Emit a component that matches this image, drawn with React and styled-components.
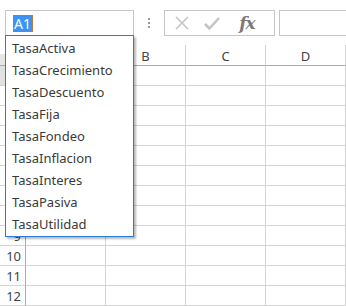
import React from "react";
import styled, { createGlobalStyle } from "styled-components";

const Global = createGlobalStyle`
  html, body { margin: 0; padding: 0; background: #fff; }
  body { font-family: "Noto Sans", "Open Sans", sans-serif; }
`;

const Page = styled.div`
  position: relative;
  width: 346px;
  height: 306px;
  overflow: hidden;
  background: #fff;
`;

const Toolbar = styled.div`
  display: flex;
  align-items: stretch;
  height: 26px;
  padding: 10px 0 0 5px;
`;

const NameBox = styled.div`
  box-sizing: border-box;
  width: 129px;
  height: 26px;
  border: 1px solid #c6c6c6;
  display: flex;
  align-items: center;
  padding-left: 7px;
`;

const Selected = styled.span`
  background: #3c93f5;
  color: #fff;
  font-size: 14px;
  line-height: 17px;
  padding: 0 1px;
  border-right: 1px solid #c07a3a;
`;

const Dots = styled.div`
  width: 30px;
  display: flex;
  flex-direction: column;
  align-items: center;
  justify-content: center;
  gap: 2px;
  & > i {
    width: 2px;
    height: 2px;
    background: #9a9a9a;
    display: block;
  }
`;

const ButtonGroup = styled.div`
  box-sizing: border-box;
  width: 111px;
  height: 26px;
  border: 1px solid #c6c6c6;
  display: flex;
  align-items: center;
  padding-left: 9px;
  gap: 0;
`;

const IconButton = styled.div`
  width: ${(p) => p.w}px;
  height: 24px;
  display: flex;
  align-items: center;
  justify-content: center;
`;

const Fx = styled.span`
  font-family: "DejaVu Serif", "Liberation Serif", serif;
  font-style: italic;
  font-weight: bold;
  font-size: 17px;
  color: #7a7a7a;
  letter-spacing: -1px;
`;

const FormulaInput = styled.div`
  box-sizing: border-box;
  flex: 1;
  margin-left: 4px;
  height: 26px;
  border: 1px solid #c6c6c6;
  border-right: none;
`;

const Sheet = styled.div`
  margin-top: 9px;
  display: grid;
  grid-template-columns: 26px 80px 80px 80px 80px;
  grid-auto-rows: 20px;
  grid-template-rows: 21px;
`;

const Corner = styled.div`
  border-right: 1px solid #ababab;
  border-bottom: 1px solid #ababab;
  background: linear-gradient(to bottom, #fff 0 45%, #e6e6e6 45% 100%);
`;

const ColHeader = styled.div`
  border-right: 1px solid #d4d4d4;
  border-bottom: 1px solid #ababab;
  background: ${(p) => (p.active ? "#e1e1e1" : "#fff")};
  display: flex;
  align-items: center;
  justify-content: center;
  font-size: 13px;
  color: #444;
  padding-top: 1px;
`;

const RowHeader = styled.div`
  border-right: 1px solid #ababab;
  border-bottom: 1px solid #d4d4d4;
  background: ${(p) => (p.active ? "#e1e1e1" : "#fff")};
  display: flex;
  align-items: center;
  justify-content: flex-end;
  padding-right: 4px;
  font-size: 13px;
  color: #444;
`;

const Cell = styled.div`
  border-right: 1px solid #d4d4d4;
  border-bottom: 1px solid #d4d4d4;
`;

const Dropdown = styled.div`
  position: absolute;
  left: 5px;
  top: 35px;
  box-sizing: border-box;
  width: 129px;
  height: 202px;
  border: 1px solid #2a7bd6;
  background: #fff;
  box-shadow: 2px 2px 2px rgba(0, 0, 0, 0.28);
  padding-top: 1px;
`;

const Item = styled.div`
  height: 22px;
  line-height: 22px;
  padding-left: 6px;
  font-size: 13px;
  color: #3a3a3a;
  white-space: nowrap;
`;

const names = [
  "TasaActiva",
  "TasaCrecimiento",
  "TasaDescuento",
  "TasaFija",
  "TasaFondeo",
  "TasaInflacion",
  "TasaInteres",
  "TasaPasiva",
  "TasaUtilidad",
];

const cols = ["A", "B", "C", "D"];
const rows = Array.from({ length: 12 }, (_, i) => i + 1);

export default function App() {
  return (
    <Page>
      <Global />
      <Toolbar>
        <NameBox>
          <Selected>A1</Selected>
        </NameBox>
        <Dots>
          <i />
          <i />
          <i />
        </Dots>
        <ButtonGroup>
          <IconButton w={16}>
            <svg width="16" height="16" viewBox="0 0 16 16">
              <path d="M2 2 L14 14 M14 2 L2 14" stroke="#c4c4c4" strokeWidth="1.6" fill="none" />
            </svg>
          </IconButton>
          <IconButton w={44}>
            <svg width="18" height="16" viewBox="0 0 18 16">
              <path d="M2 9 L6.5 13.5 L16 3" stroke="#c4c4c4" strokeWidth="2.6" fill="none" strokeLinejoin="round" />
            </svg>
          </IconButton>
          <IconButton w={26}>
            <Fx>fx</Fx>
          </IconButton>
        </ButtonGroup>
        <FormulaInput />
      </Toolbar>
      <Sheet>
        <Corner />
        {cols.map((c) => (
          <ColHeader key={c} active={c === "A"}>
            {c}
          </ColHeader>
        ))}
        {rows.map((r) => (
          <React.Fragment key={r}>
            <RowHeader active={r === 1}>{r}</RowHeader>
            {cols.map((c) => (
              <Cell key={c} />
            ))}
          </React.Fragment>
        ))}
      </Sheet>
      <Dropdown>
        {names.map((n) => (
          <Item key={n}>{n}</Item>
        ))}
      </Dropdown>
    </Page>
  );
}
